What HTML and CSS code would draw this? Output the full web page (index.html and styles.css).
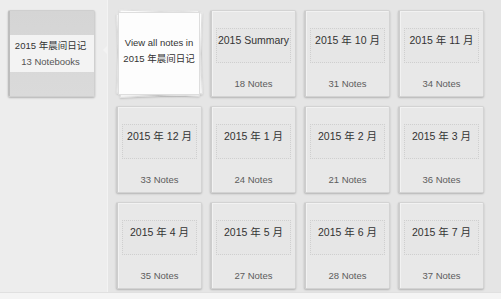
FILE: index.html
```html
<!DOCTYPE html>
<html>
<head>
<meta charset="utf-8">
<link rel="stylesheet" href="styles.css">
</head>
<body>
<div class="app">
  <aside class="sidebar">
    <div class="notebook">
      <div class="nb-band">
        <div class="nb-name">2015 年晨间日记</div>
        <div class="nb-count">13 Notebooks</div>
      </div>
    </div>
  </aside>
  <main class="main">
    <span class="notch"></span>
    <div class="grid">
      <div class="card-all">
        <div class="sheet sheet-back"></div>
        <div class="sheet sheet-mid"></div>
        <div class="sheet sheet-top">
          <div>View all notes in</div>
          <div>2015 年晨间日记</div>
        </div>
      </div>
      <div class="card"><div class="title-box">2015 Summary</div><div class="count">18 Notes</div></div>
      <div class="card"><div class="title-box">2015 年 10 月</div><div class="count">31 Notes</div></div>
      <div class="card"><div class="title-box">2015 年 11 月</div><div class="count">34 Notes</div></div>
      <div class="card"><div class="title-box">2015 年 12 月</div><div class="count">33 Notes</div></div>
      <div class="card"><div class="title-box">2015 年 1 月</div><div class="count">24 Notes</div></div>
      <div class="card"><div class="title-box">2015 年 2 月</div><div class="count">21 Notes</div></div>
      <div class="card"><div class="title-box">2015 年 3 月</div><div class="count">36 Notes</div></div>
      <div class="card"><div class="title-box">2015 年 4 月</div><div class="count">35 Notes</div></div>
      <div class="card"><div class="title-box">2015 年 5 月</div><div class="count">27 Notes</div></div>
      <div class="card"><div class="title-box">2015 年 6 月</div><div class="count">28 Notes</div></div>
      <div class="card"><div class="title-box">2015 年 7 月</div><div class="count">37 Notes</div></div>
    </div>
  </main>
</div>
</body>
</html>
```

FILE: styles.css
```css
html, body {
  margin: 0;
  padding: 0;
}
body {
  background: #f4f4f4;
  font-family: "Liberation Sans", Arial, "Noto Sans CJK SC", sans-serif;
  width: 501px;
  height: 299px;
  overflow: hidden;
}
.app {
  display: flex;
  height: 292px;
  border-bottom: 1px solid #e0e0e0;
}
.sidebar {
  width: 107px;
  flex: none;
  background: #ededed;
  padding: 10px 0 0 8px;
  box-sizing: border-box;
}
.notebook {
  width: 87px;
  height: 87px;
  box-sizing: border-box;
  background: linear-gradient(#d5d5d5, #dadada);
  border: 1px solid #cfcfcf;
  border-left: 2px solid #bdbdbd;
  border-radius: 2px;
  box-shadow: 0 1px 2px rgba(0,0,0,0.25);
  padding-top: 24px;
}
.nb-band {
  background: #f3f3f3;
  height: 37px;
  display: flex;
  flex-direction: column;
  justify-content: center;
  align-items: center;
  font-size: 9.5px;
  line-height: 16px;
  color: #333;
  padding-right: 3px;
}
.nb-count {
  color: #555;
}
.main {
  position: relative;
  flex: 1;
  background: #e5e5e5;
  border-left: 1px solid #f3f3f3;
  padding: 10px 0 0 8px;
}
.notch {
  position: absolute;
  left: -5px;
  top: 45px;
  width: 0;
  height: 0;
  border-top: 5px solid transparent;
  border-bottom: 5px solid transparent;
  border-right: 5px solid #f3f3f3;
}
.grid {
  display: grid;
  grid-template-columns: repeat(4, 86px);
  grid-auto-rows: 87px;
  column-gap: 8px;
  row-gap: 9px;
}
.card {
  box-sizing: border-box;
  background: #e8e8e8;
  border: 1px solid #d3d3d3;
  border-left: 2px solid #cdcdcd;
  border-radius: 2px;
  box-shadow: 0 1px 2px rgba(0,0,0,0.22), inset 1px 1px 0 #f2f2f2;
  padding: 17px 4px 0 4px;
  display: flex;
  flex-direction: column;
}
.title-box {
  height: 35px;
  box-sizing: border-box;
  border: 1px dotted #cfcfcf;
  background: #e6e6e6;
  text-align: center;
  font-size: 10.5px;
  line-height: 14px;
  padding-top: 4px;
  color: #333;
  white-space: nowrap;
}
.count {
  margin-top: 15px;
  text-align: center;
  font-size: 9.5px;
  line-height: 12px;
  color: #5c5c5c;
}
.card-all {
  position: relative;
}
.sheet {
  position: absolute;
  background: #fdfdfd;
  border: 1px solid #dedede;
  box-sizing: border-box;
}
.sheet-back {
  left: 2px; top: 2px; right: 1px; bottom: 1px;
  transform: rotate(-2.5deg);
  box-shadow: 0 1px 2px rgba(0,0,0,0.18);
}
.sheet-mid {
  left: 2px; top: 1px; right: 1px; bottom: 2px;
  transform: rotate(2deg);
  box-shadow: 0 1px 2px rgba(0,0,0,0.18);
}
.sheet-top {
  left: 2px; top: 2px; right: 2px; bottom: 2px;
  display: flex;
  flex-direction: column;
  justify-content: center;
  align-items: center;
  font-size: 9.5px;
  line-height: 16px;
  color: #333;
  padding-bottom: 6px;
}
```
